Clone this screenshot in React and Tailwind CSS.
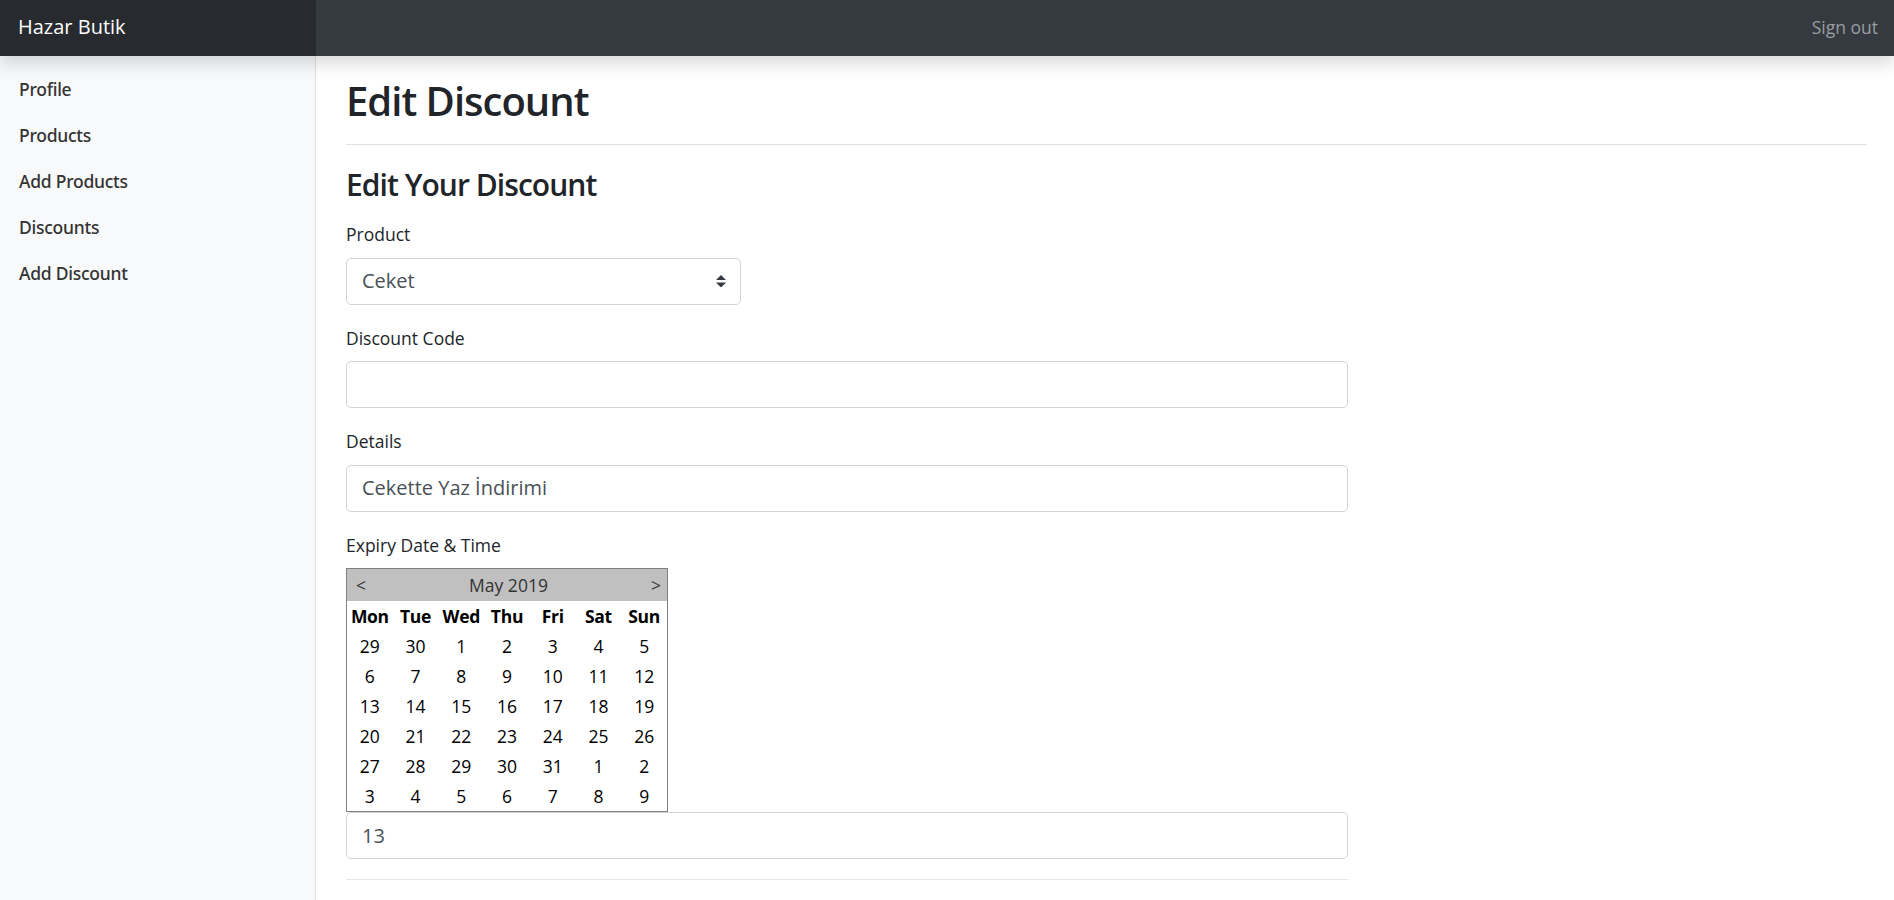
import React from 'react'

const FONT = { fontFamily: '"Open Sans", "Noto Sans", sans-serif' }
const NAV_FONT = { fontFamily: '"Noto Sans", "Open Sans", sans-serif' }

const NAV = ['Profile', 'Products', 'Add Products', 'Discounts', 'Add Discount']
const DAYS = ['Mon', 'Tue', 'Wed', 'Thu', 'Fri', 'Sat', 'Sun']

// semanas de mayo 2019, empezando en lunes
const WEEKS = [
  [29, 30, 1, 2, 3, 4, 5],
  [6, 7, 8, 9, 10, 11, 12],
  [13, 14, 15, 16, 17, 18, 19],
  [20, 21, 22, 23, 24, 25, 26],
  [27, 28, 29, 30, 31, 1, 2],
  [3, 4, 5, 6, 7, 8, 9],
]

function Label({ children }) {
  return <div className="text-[17.5px] leading-[26.5px] mb-[10px] text-[#212529]">{children}</div>
}

function TextInput({ value }) {
  return (
    <div className="h-[47px] w-full border border-[#ced4da] rounded-[5px] px-[15px] flex items-center text-[20px] text-[#495057] bg-white">
      {value}
    </div>
  )
}

function Calendar() {
  return (
    <div className="w-[322px] border border-[#808080] bg-white text-black">
      <div className="h-[32px] bg-[#c0c0c0] flex items-center justify-between pl-[9px] pr-[6px] text-[17.5px] text-[#333]">
        <span>&lt;</span>
        <span>May 2019</span>
        <span>&gt;</span>
      </div>
      <div className="grid grid-cols-7 text-[17.5px]">
        {DAYS.map((d) => (
          <div key={d} className="h-[30px] flex items-center justify-center font-bold tracking-[-0.3px]">{d}</div>
        ))}
        {WEEKS.flat().map((n, i) => (
          <div key={i} className="h-[30px] flex items-center justify-center">{n}</div>
        ))}
      </div>
    </div>
  )
}

export default function App() {
  return (
    <div className="min-h-screen flex flex-col bg-white text-[#212529]" style={FONT}>
      <header className="h-[56px] flex bg-[#343a40] relative z-10 shadow-[0_8px_16px_rgba(0,0,0,0.15)]">
        <div className="w-[316px] bg-[#272b30] flex items-center pl-[18px] pb-[2px] text-white text-[20px]">
          Hazar Butik
        </div>
        <div className="flex-1 flex items-center justify-end pr-[16px] pb-[2px]">
          <span className="text-[17.5px] text-[#9a9da0]">Sign out</span>
        </div>
      </header>

      <div className="flex flex-1">
        <aside className="w-[316px] shrink-0 bg-[#f8f9fa] shadow-[inset_-1px_0_0_rgba(0,0,0,0.1)] pt-[10px]" style={NAV_FONT}>
          <ul>
            {NAV.map((item) => (
              <li key={item} className="pl-[19px] pr-[17px] py-[10px] text-[17.5px] leading-[26px] font-medium tracking-[-0.25px] text-[#333]">
                {item}
              </li>
            ))}
          </ul>
        </aside>

        <main className="flex-1 pl-[30px] pr-[27px] pt-[21px]">
          <div className="border-b border-[#dee2e6] pb-[19px]">
            <h1 className="text-[40px] leading-[48px] font-semibold tracking-[-1px]">Edit Discount</h1>
          </div>

          <div className="w-[1002px] pt-[22px]">
            <h2 className="text-[30px] leading-[36px] font-semibold tracking-[-0.95px] mb-[18px]">Edit Your Discount</h2>

            <div className="mb-[20px]">
              <Label>Product</Label>
              <div className="h-[47px] w-[395px] border border-[#ced4da] rounded-[5px] pl-[15px] pr-[14px] flex items-center justify-between text-[20px] text-[#495057]">
                <span>Ceket</span>
                <svg width="10" height="12.5" viewBox="0 0 4 5">
                  <path d="M2 0L0 2h4zm0 5L0 3h4z" fill="#343a40" />
                </svg>
              </div>
            </div>

            <div className="mb-[20px]">
              <Label>Discount Code</Label>
              <TextInput value="" />
            </div>

            <div className="mb-[20px]">
              <Label>Details</Label>
              <TextInput value="Cekette Yaz İndirimi" />
            </div>

            <div className="mb-[20px]">
              <Label>Expiry Date &amp; Time</Label>
              <Calendar />
              <TextInput value="13" />
            </div>

            <hr className="border-0 border-t border-[#e6e6e6]" />
          </div>
        </main>
      </div>
    </div>
  )
}
